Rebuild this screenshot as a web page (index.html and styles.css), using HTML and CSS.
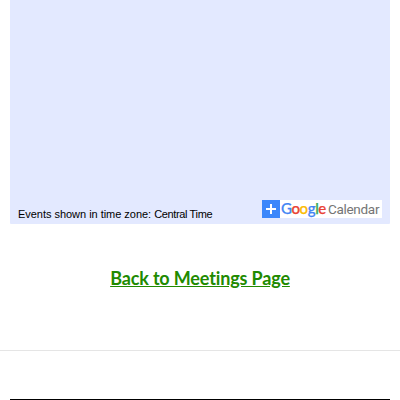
FILE: index.html
```
<!DOCTYPE html>
<html lang="en">
<head>
<meta charset="utf-8">
<title>Meetings Calendar</title>
<link rel="stylesheet" href="styles.css">
</head>
<body>
<main>
  <section class="calendar">
    <span class="timezone">Events shown in time zone: <span class="zone">Central Time</span></span>
    <a class="badge">
      <svg class="plus" viewBox="0 0 18 18"><path d="M4 9h10M9 4v10" stroke="#fff" stroke-width="2"/></svg>
      <span class="google"><i class="b">G</i><i class="r">o</i><i class="y">o</i><i class="b">g</i><i class="g">l</i><i class="r">e</i></span>
      <span class="word">Calendar</span>
    </a>
  </section>
  <p class="back"><a>Back to Meetings Page</a></p>
</main>
<footer><div class="rule"></div></footer>
</body>
</html>
```
FILE: styles.css
```
* { box-sizing: border-box; }
body { margin: 0; height: 400px; overflow: hidden; background: #fff; font-family: "Liberation Sans", Arial, sans-serif; }
main { height: 351px; padding: 0 10px; border-bottom: 1px solid #e5e5e5; }
.calendar { height: 224px; background: #e3e9ff; border-radius: 0 0 1px 1px; display: flex; align-items: flex-end; justify-content: space-between; padding: 0 8px 6px; }
.timezone { font-size: 11px; line-height: 13px; letter-spacing: -0.03px; margin-bottom: -3px; color: #000; }
.zone { letter-spacing: -0.36px; }
.badge { display: flex; align-items: center; width: 120px; height: 18px; background: #fff; }
.plus { flex: none; width: 18px; height: 18px; background: #3c87fb; }
.google { flex: none; font: 500 15px/18px Lato, sans-serif; letter-spacing: -0.4px; margin: -3px 0 0 1px; width: 47px; -webkit-text-stroke: 0.25px; }
.google i { font-style: normal; }
.b { color: #4285f4; } .r { color: #ea4335; } .y { color: #fbbc05; } .g { color: #34a853; }
.word { font: 13.5px/18px Roboto, sans-serif; color: #757575; letter-spacing: -0.3px; margin-top: -1px; }
.back { margin: 40px 0 0; text-align: center; font: bold 18px/28px Lato, sans-serif; color: #218a00; letter-spacing: -0.15px; font-variant-ligatures: none; }
.back a { text-decoration: underline; }
footer { padding: 48px 10px 0; }
.rule { height: 1px; background: #000; }
```
